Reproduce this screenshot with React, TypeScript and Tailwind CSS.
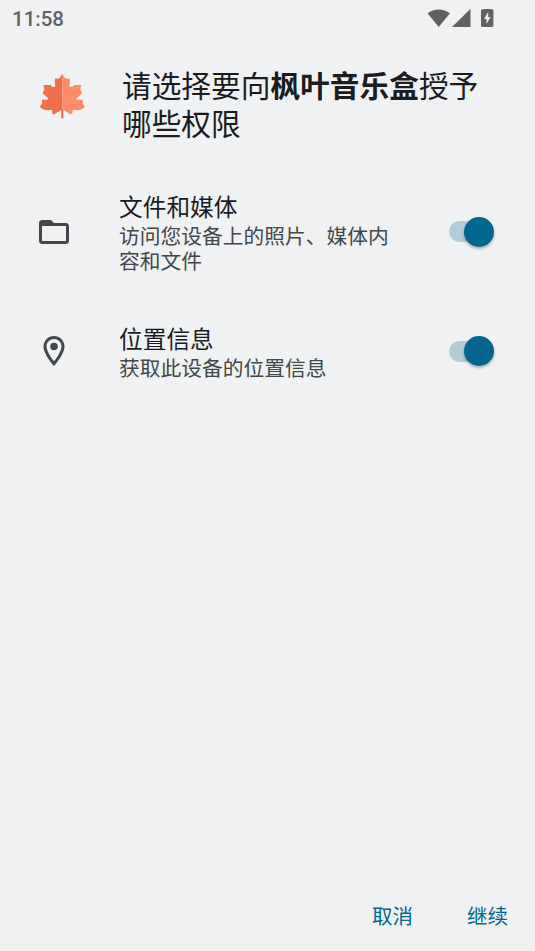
import { useState } from "react";
import type { ReactNode } from "react";

interface PermissionRowProps {
  icon: ReactNode;
  title: string;
  lines: string[];
  className: string;
}

function Toggle() {
  const [on, setOn] = useState(true);

  return (
    <button
      role="switch"
      aria-checked={on}
      onClick={() => setOn(!on)}
      className={`flex h-[30px] w-[45px] items-center ${on ? "justify-end" : "justify-start"}`}
    >
      <span
        className={`flex h-[21px] w-full items-center rounded-full ${on ? "justify-end bg-[#b0cdd9]" : "justify-start bg-[#c4c7c9]"}`}
      >
        <span
          className={`size-[30px] shrink-0 rounded-full shadow-[0_2px_3px_rgba(0,0,0,0.28)] ${on ? "bg-[#04668f]" : "bg-white"}`}
        />
      </span>
    </button>
  );
}

function PermissionRow({ icon, title, lines, className }: PermissionRowProps) {
  return (
    <div className={`flex items-center pr-[41px] pl-[35.500px] ${className}`}>
      <div className="flex w-[83.500px] shrink-0">{icon}</div>
      <div className="flex-1">
        <h2 className="text-[23.7px] leading-[33px] text-[#1a1c1e]">{title}</h2>
        <p className="text-[20.75px] leading-[25px] text-[#44474a]">
          {lines.map((line) => (
            <span key={line} className="block whitespace-nowrap">{line}</span>
          ))}
        </p>
      </div>
      <Toggle />
    </div>
  );
}

function StatusBar() {
  return (
    <header className="flex h-[38px] items-center pr-[41px] pl-3 text-[#5f6163]">
      <span className="flex-1 font-[Roboto] text-[20.5px] leading-6 font-medium">11:58</span>
      <svg className="h-5 w-[67px]" viewBox="0 0 67 20" fill="currentColor">
        {/* wifi */}
        <path d="M.5 4.300C7-.9 16.500-.9 23 4.300L11.750 18Z" />
        {/* signal */}
        <path d="M43.500-.2V18H25Z" />
        {/* battery */}
        <path
          fillRule="evenodd"
          d="M57.700-1.800h5v2h2.300a1.400 1.400 0 0 1 1.400 1.400v15a1.400 1.400 0 0 1-1.400 1.400h-9.600a1.400 1.400 0 0 1-1.400-1.400V1.600A1.400 1.400 0 0 1 55.400.2h2.300zM61.200 3L57 10h2.500v5L63.600 8h-2.400z"
        />
      </svg>
    </header>
  );
}

function MapleLeaf() {
  return (
    <svg className="h-[47px] w-[47px] shrink-0" viewBox="0 0 141 141">
      <path
        fill="#f06f4c"
        d="M70 2L62 15Q55 19 49 16L47 23L49 40Q44 44 38 40L34 36L13 36L16 49L11 61L29 77L24 80L9 80L9 92L2 101Q11 111 25 112L39 110L40 122L46 124L65 112H70Z"
      />
      <path
        fill="#ff8c68"
        d="M70 2L78 15Q85 19 91 16L93 23L91 40Q96 44 102 40L106 36L127 36L124 49L129 61L111 77L116 80L131 80L131 92L138 101Q129 111 115 112L101 110L100 122L94 124L75 112H70Z"
      />
      <path fill="#e0684a" d="M67 111h6v25h-6z" />
    </svg>
  );
}

export default function App() {
  return (
    <main className="flex h-screen w-full flex-col overflow-hidden bg-[#eff1f3] font-['Noto_Sans_CJK_SC',sans-serif]">
      <StatusBar />

      <div className="flex items-start pt-[28px] pl-[39px]">
        <div className="mt-[7px] w-[83px] shrink-0">
          <MapleLeaf />
        </div>
        <h1 className="text-[29.7px] leading-[37.5px] whitespace-nowrap text-[#1a1c1e]">
          请选择要向<b>枫叶音乐盒</b>授予
          <br />
          哪些权限
        </h1>
      </div>

      <PermissionRow
        className="mt-[49px]"
        title="文件和媒体"
        lines={["访问您设备上的照片、媒体内", "容和文件"]}
        icon={
          <svg className="size-9" viewBox="0 0 24 24" fill="#44474a">
            <path d="M20 6h-8l-2-2H4c-1.100 0-2 .9-2 2v12c0 1.100.9 2 2 2h16c1.100 0 2-.9 2-2V8c0-1.100-.9-2-2-2zm0 12H4V8h16v10z" />
          </svg>
        }
      />

      <PermissionRow
        className="mt-[49px]"
        title="位置信息"
        lines={["获取此设备的位置信息"]}
        icon={
          <svg className="size-9" viewBox="0 0 24 24" fill="#44474a">
            <path d="M12 2C8.130 2 5 5.130 5 9c0 5.250 7 13 7 13s7-7.750 7-13c0-3.870-3.130-7-7-7zM7 9c0-2.760 2.240-5 5-5s5 2.240 5 5c0 2.880-2.880 7.190-5 9.880C9.920 16.210 7 11.850 7 9z" />
            <circle cx="12" cy="9" r="2.500" />
          </svg>
        }
      />

      <footer className="mt-auto flex justify-end gap-[54px] pr-[27px] pb-[21px] text-[20.5px] leading-[30px] text-[#04668f]">
        <button>取消</button>
        <button>继续</button>
      </footer>
    </main>
  );
}
